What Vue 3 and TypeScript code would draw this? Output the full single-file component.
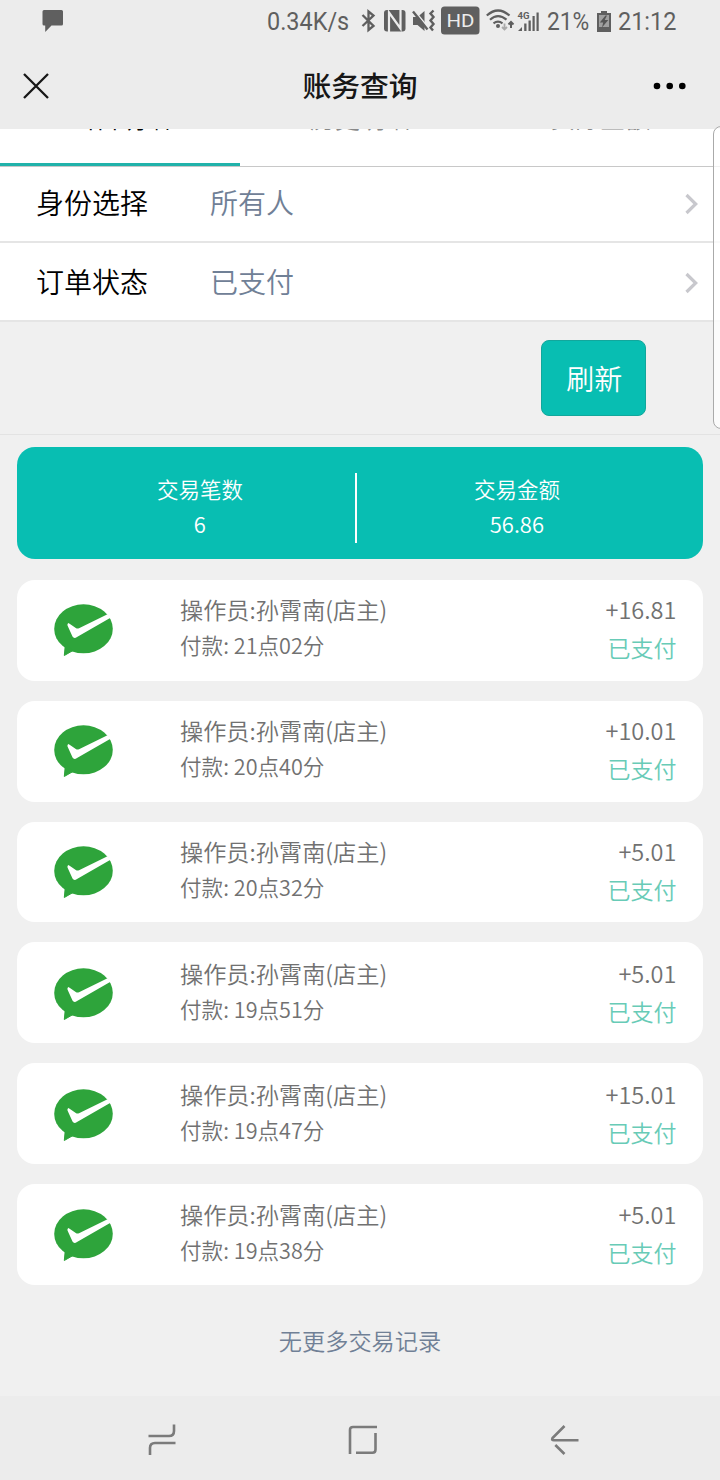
<script setup lang="ts">
interface Order {
  time: string
  amount: string
}

const tabs: string[] = ['当日明细', '历史明细', '实际金额']

const filters: { label: string; value: string }[] = [
  { label: '身份选择', value: '所有人' },
  { label: '订单状态', value: '已支付' },
]

const orders: Order[] = [
  { time: '21点02分', amount: '+16.81' },
  { time: '20点40分', amount: '+10.01' },
  { time: '20点32分', amount: '+5.01' },
  { time: '19点51分', amount: '+5.01' },
  { time: '19点47分', amount: '+15.01' },
  { time: '19点38分', amount: '+5.01' },
]
</script>

<template>
  <div class="screen">
    <header class="top">
      <div class="status">
        <svg class="bubble" width="22" height="24" viewBox="0 0 22 24">
          <path d="M2 0H19.500Q21 0 21 1.500V14Q21 15.500 19.500 15.500H9.500L3.200 22V15.500H2Q.500 15.500 .500 14V1.500Q.500 0 2 0Z" fill="#5f5f5f" />
        </svg>
        <span class="speed">0.34K/s</span>
        <svg class="signals" width="186" height="30" viewBox="358 6 186 30">
          <g fill="none" stroke="#5f5f5f" stroke-width="2.300">
            <path d="M362.500 15L373.500 26L368.500 30V11.500L373.500 15.500L362.500 26" />
          </g>
          <rect x="384" y="10" width="21.500" height="21.500" rx="3" fill="#5f5f5f" />
          <path d="M389 32V12.500L400.500 28.500V9.500" fill="none" stroke="#ececec" stroke-width="2.200" />
          <path d="M413 17H417.500L424.500 11V31L417.500 25H413Z" fill="#5f5f5f" />
          <path d="M414 10L429 28.500" stroke="#ececec" stroke-width="1.500" />
          <path d="M413 11.500L427.500 29.500" stroke="#5f5f5f" stroke-width="2.400" />
          <path d="M433.500 10.500L430.500 13.500L433.500 17L430.500 20.500L433.500 24L430.500 27.500L433 30.500" fill="none" stroke="#5f5f5f" stroke-width="2.400" />
          <rect x="441" y="6.500" width="38.500" height="28" rx="3.500" fill="#5f5f5f" />
          <text x="446.500" y="27" font-size="18.500" textLength="28" lengthAdjust="spacingAndGlyphs" fill="#ececec">HD</text>
          <g fill="none" stroke="#5f5f5f" stroke-width="2.200">
            <path d="M486.800 15.500Q498 5.500 509.500 15.500M490 19.700Q498 12.500 506.500 19.700M493.500 23.300Q498 20 502.500 23.300" />
          </g>
          <circle cx="498" cy="26" r="2" fill="#5f5f5f" />
          <path d="M511 28V22M508.500 24.500L511 22L513.500 24.500" fill="none" stroke="#5f5f5f" stroke-width="2" />
          <path d="M504.500 23.500V30M502 27L504.500 29.500L507 27" fill="none" stroke="#aaa" stroke-width="1.800" />
          <text x="517.500" y="19" font-size="9.500" font-weight="700" textLength="12" lengthAdjust="spacingAndGlyphs" fill="#5f5f5f">4G</text>
          <path d="M518 31L522 27V31ZM524.200 23.500H526.500V31H524.200ZM528.500 20.500H530.800V31H528.500ZM532.500 16H534.700V31H532.500ZM536.500 12.500H538.700V31H536.500Z" fill="#5f5f5f" />
        </svg>
        <span class="percent">21%</span>
        <svg class="battery" width="14" height="21" viewBox="0 0 14 21">
          <path d="M4 0H10V2H14V21H0V2H4Z" fill="#5f5f5f" />
          <path d="M2 4H12V16H2Z" fill="#a0a0a0" />
          <path d="M8.500 4.500L2.800 11.500H6.200L5 16.500L11.300 9H7.700L10 4.500Z" fill="#555" />
        </svg>
        <span class="clock">21:12</span>
      </div>
      <div class="titlebar">
        <svg class="close" width="26" height="26" viewBox="0 0 26 26">
          <path d="M1 1L25 25M25 1L1 25" stroke="#171717" stroke-width="2.300" />
        </svg>
        <h1>账务查询</h1>
        <svg class="more" width="34" height="8" viewBox="0 0 34 8">
          <circle cx="4" cy="4" r="3.300" /><circle cx="16.700" cy="4" r="3.300" /><circle cx="29.300" cy="4" r="3.300" />
        </svg>
      </div>
    </header>

    <nav class="tabs">
      <div v-for="(tab, i) in tabs" :key="tab" class="tab" :class="{ active: i === 0 }">
        <span>{{ tab }}</span>
      </div>
    </nav>

    <section class="filters">
      <div v-for="f in filters" :key="f.label" class="filter">
        <span class="label">{{ f.label }}</span>
        <span class="value">{{ f.value }}</span>
        <svg class="chevron" width="14" height="22" viewBox="0 0 14 22">
          <path d="M1.500 2L10.700 11L1.500 20" fill="none" stroke="#c8c8cd" stroke-width="3.200" />
        </svg>
      </div>
    </section>

    <div class="actions"><button class="refresh">刷新</button></div>

    <section class="summary">
      <div class="stat"><span>交易笔数</span><b>6</b></div>
      <i class="divider"></i>
      <div class="stat"><span>交易金额</span><b>56.86</b></div>
    </section>

    <ul class="orders">
      <li v-for="o in orders" :key="o.time">
        <svg class="pay" width="60" height="54" viewBox="0 0 60 54">
          <ellipse cx="29.500" cy="24.800" rx="29.300" ry="24.500" fill="#2ea43b" />
          <path d="M11.500 39L10.300 51.500L19 46.500Z" fill="#2ea43b" stroke="#2ea43b" stroke-linejoin="round" />
          <path d="M14.500 19Q13 19.500 13.500 21.500L18.500 32.500Q20 35 23 33L56.500 13.800L53.500 10.200L25 24.200Q23.300 25 21.800 24Z" fill="#fff" />
        </svg>
        <div class="detail">
          <p class="operator">操作员:孙霄南(店主)</p>
          <p class="paid">付款: {{ o.time }}</p>
        </div>
        <div class="result">
          <p class="amount">{{ o.amount }}</p>
          <p class="state">已支付</p>
        </div>
      </li>
    </ul>

    <p class="end">无更多交易记录</p>

    <footer class="navbar">
      <svg width="28" height="32" viewBox="0 0 28 32">
        <path d="M.500 12H21Q26 12 26 7V.500M27.500 19H7Q2 19 2 24V31" />
      </svg>
      <svg width="30" height="30" viewBox="0 0 30 30">
        <path d="M2 29V5Q2 2 5 2H29M27.500 8V24.500Q27.500 27.700 24.500 27.700H8" />
      </svg>
      <svg width="30" height="32" viewBox="0 0 30 32">
        <path d="M15.500 2L3.500 14Q2.300 16.300 5 16.300H29.500M6.300 21L15.500 30" />
      </svg>
    </footer>
    <aside class="edge"></aside>
  </div>
</template>

<style>
body {
  margin: 0;
}
</style>

<style scoped>
.screen {
  position: relative;
  box-sizing: border-box;
  width: 720px;
  height: 1480px;
  display: flex;
  flex-direction: column;
  overflow: hidden;
  background: #f0f0f0;
  font-family: "Noto Sans CJK SC", sans-serif;
  font-weight: 350;
}
p, h1, ul {
  margin: 0;
  padding: 0;
}
svg {
  display: block;
  flex: none;
}
.top {
  height: 129px;
  flex: none;
  background: #ececec;
}
.status {
  height: 42px;
  display: flex;
  align-items: center;
  padding-left: 42px;
  color: #5f5f5f;
  font: 400 26.500px/42px Roboto, sans-serif;
  white-space: nowrap;
}
.status span {
  flex: none;
  transform-origin: left center;
}
.status text {
  font-family: Roboto, sans-serif;
}
.bubble {
  margin-top: 1px;
}
.speed {
  width: 91px;
  margin-left: 203px;
  transform: scaleX(0.885);
}
.percent {
  width: 50px;
  margin-left: 3px;
  transform: scaleX(0.86);
}
.clock {
  margin-left: 7px;
  transform: scaleX(0.885);
}
.titlebar {
  height: 86px;
  display: grid;
  grid-template-columns: 48px 1fr 48px;
  align-items: center;
  padding: 1px 20px 0 23px;
  box-sizing: border-box;
}
.titlebar h1 {
  margin: -1px 0 0 -3px;
  text-align: center;
  color: #171717;
  font-size: 28.800px;
  line-height: 30px;
  font-weight: 500;
}
.more {
  margin-left: 1px;
}
.tabs {
  height: 37px;
  flex: none;
  display: flex;
  overflow: hidden;
  background: #fff;
  border-bottom: 1px solid #c8c8c8;
}
.tab {
  width: 240px;
  height: 37px;
  box-sizing: border-box;
  color: #888;
  font-size: 25px;
  text-align: center;
}
.tab span {
  display: block;
  height: 28px;
  line-height: 28px;
  margin-top: -26px;
}
.tab.active {
  color: #000;
  border-bottom: 3px solid #20b2aa;
}
.filters {
  flex: none;
  background: #fff;
}
.filter {
  box-sizing: border-box;
  height: 76px;
  display: flex;
  align-items: center;
  padding: 0 21px 4px 36px;
  border-bottom: 2px solid #e5e5e5;
  font-size: 28px;
  line-height: 40px;
}
.filter + .filter {
  height: 79px;
  padding-bottom: 2px;
}
.label {
  width: 174px;
  color: #000;
}
.value {
  flex: 1;
  color: #708096;
}
.chevron {
  margin-top: 4px;
}
.actions {
  height: 112px;
  flex: none;
  display: flex;
  justify-content: flex-end;
  align-items: center;
  padding-right: 74px;
  border-bottom: 1px solid #e3e3e3;
}
.refresh {
  width: 105.500px;
  height: 76px;
  padding: 0 0 0 2px;
  border: 1px solid #12a79c;
  border-radius: 8px;
  background: #08beb2;
  color: #fff;
  font: inherit;
  font-size: 28px;
}
.summary {
  height: 112px;
  flex: none;
  margin: 12px 16.600px 0 17.400px;
  border-radius: 18px;
  background: #08beb2;
  display: grid;
  grid-template-columns: 311px 2px 1fr;
  align-items: center;
  color: #fff;
  padding-left: 27px;
  padding-right: 27px;
}
.stat {
  display: flex;
  flex-direction: column;
  align-items: center;
  font-size: 21.500px;
  line-height: 35px;
  padding-top: 6px;
}
.stat b {
  font-size: 22px;
  font-weight: 350;
}
.divider {
  height: 70px;
  margin-top: 10px;
  background: #fff;
}
.orders {
  list-style: none;
  margin: 21px 16.600px 0 17.400px;
  display: flex;
  flex-direction: column;
  gap: 20px;
}
.orders li {
  box-sizing: border-box;
  height: 100.800px;
  display: flex;
  align-items: flex-start;
  border-radius: 18px;
  background: #fff;
}
.orders li:nth-child(n + 4) {
  padding-top: 1.500px;
}
.pay {
  margin: 24px 0 0 36.600px;
}
.detail {
  flex: 1;
  margin: 12px 0 0 66px;
  color: #717171;
}
.operator {
  font-size: 23.200px;
  line-height: 35px;
}
.paid {
  font-size: 21.600px;
  line-height: 36px;
}
.result {
  margin: 11px 27px 0 0;
  text-align: right;
  color: #717171;
}
.amount {
  font-size: 23.500px;
  line-height: 36px;
}
.state {
  font-size: 23px;
  line-height: 40px;
  color: #68cbb7;
}
.end {
  margin-top: 37px;
  text-align: center;
  color: #708096;
  font-size: 23.200px;
  line-height: 36px;
}
.navbar {
  height: 84px;
  flex: none;
  margin-top: auto;
  display: flex;
  align-items: center;
  justify-content: space-between;
  padding: 4px 141px 0 148px;
  box-sizing: border-box;
  background: #ececec;
}
.navbar path {
  fill: none;
  stroke: #7b7b7b;
  stroke-width: 2.600;
}
.edge {
  position: absolute;
  left: 713px;
  top: 126px;
  width: 20px;
  height: 303px;
  box-sizing: border-box;
  border: 1px solid #aaa;
  border-radius: 8px;
  background: rgba(255, 255, 255, 0.75);
}
</style>
